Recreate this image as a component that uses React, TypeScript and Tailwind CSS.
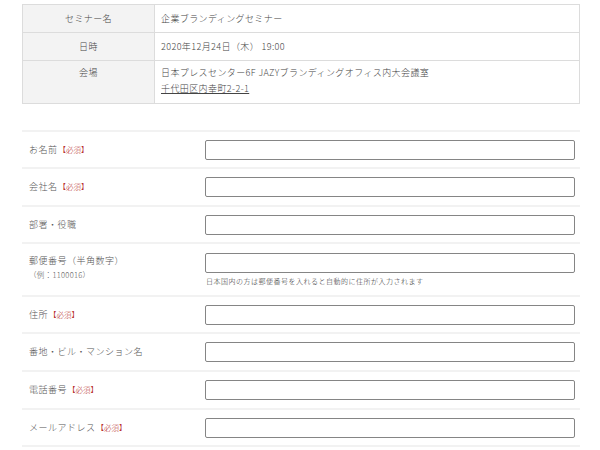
import React from "react";

const Req = () => (
  <span className="text-[7.5px] text-[#b8312f] ml-[1px] tracking-normal">【必須】</span>
);

export default function App() {
  const rows: { label: React.ReactNode; h: string; req?: boolean }[] = [
    { label: "お名前", h: "h-[37px]", req: true },
    { label: "会社名", h: "h-[38px]", req: true },
    { label: "部署・役職", h: "h-[37px]" },
  ];
  const rows2: { label: React.ReactNode; h: string; req?: boolean }[] = [
    { label: "住所", h: "h-[37px]", req: true },
    { label: "番地・ビル・マンション名", h: "h-[38px]" },
    { label: "電話番号", h: "h-[38px]", req: true },
    { label: "メールアドレス", h: "h-[37px]", req: true },
  ];
  const input = (
    <div className="w-[370px] h-[20px] border border-[#858585] rounded-[2px] bg-white" />
  );
  const renderRow = (r: { label: React.ReactNode; h: string; req?: boolean }, i: number) => (
    <div key={i} className={`flex items-center border-b-2 border-[#f2f2f2] ${r.h}`}>
      <div className="w-[183px] pl-[7px] text-[9px] tracking-[0.5px] text-[#555] font-light">
        {r.label}
        {r.req && <Req />}
      </div>
      {input}
    </div>
  );
  return (
    <div
      className="w-[600px] h-[450px] overflow-hidden bg-white pt-[4px] pl-[22px] pr-[20px]"
      style={{ fontFamily: '"Noto Sans CJK JP", "Noto Sans", sans-serif' }}
    >
      <div className="border-t border-l border-r border-[#dcdcdc] text-[9px] text-[#444] tracking-[0.4px] font-light">
        <div className="grid grid-cols-[132px_1fr] h-[28px] border-b border-[#dcdcdc]">
          <div className="bg-[#f3f3f3] border-r border-[#dcdcdc] flex items-center justify-center">セミナー名</div>
          <div className="flex items-center pl-[6px]">企業ブランディングセミナー</div>
        </div>
        <div className="grid grid-cols-[132px_1fr] h-[28px] border-b border-[#dcdcdc]">
          <div className="bg-[#f3f3f3] border-r border-[#dcdcdc] flex items-center justify-center">日時</div>
          <div className="flex items-center pl-[6px]">2020年12月24日（木） 19:00</div>
        </div>
        <div className="grid grid-cols-[132px_1fr] h-[43px] border-b border-[#dcdcdc]">
          <div className="bg-[#f3f3f3] border-r border-[#dcdcdc] flex justify-center pt-[4px] leading-[16px]">会場</div>
          <div className="pl-[6px] pt-[4px] leading-[16px]">
            <div>日本プレスセンター6F JAZYブランディングオフィス内大会議室</div>
            <div className="underline">千代田区内幸町2-2-1</div>
          </div>
        </div>
      </div>

      <div className="mt-[26px] border-t-2 border-[#f2f2f2]">
        {rows.map(renderRow)}
        <div className="flex border-b-2 border-[#f2f2f2] h-[53px]">
          <div className="w-[183px] pl-[7px] pt-[11px] text-[#555] font-light">
            <div className="text-[9px] leading-[12px] tracking-[0.5px]">郵便番号（半角数字）</div>
            <div className="text-[7.5px] leading-[10px] mt-[3px] tracking-[0.3px]">（例：1100016）</div>
          </div>
          <div className="pt-[9px]">
            {input}
            <div className="text-[7px] leading-[10px] mt-[3px] pl-[1px] tracking-[0.5px] text-[#333] font-light">
              日本国内の方は郵便番号を入れると自動的に住所が入力されます
            </div>
          </div>
        </div>
        {rows2.map(renderRow)}
      </div>
    </div>
  );
}
